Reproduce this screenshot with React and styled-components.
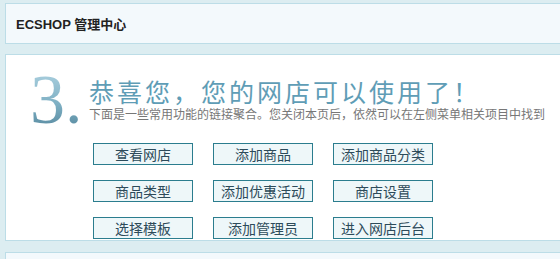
import React from "react";
import styled, { createGlobalStyle } from "styled-components";

const Global = createGlobalStyle`
  html, body { margin: 0; padding: 0; background: #dcedf1; overflow: hidden; }
  body { font-family: "Liberation Sans", "Noto Sans CJK SC", sans-serif; }
`;

const Page = styled.div`
  width: 560px;
  height: 259px;
  overflow: hidden;
  padding: 3px 0 0 5px;
  box-sizing: border-box;
`;

const Panel = styled.div`
  width: 620px;
  box-sizing: border-box;
  border: 1px solid #bcdde7;
  background: ${(p) => p.$bg || "#fff"};
  margin-bottom: ${(p) => p.$mb || 0}px;
  height: ${(p) => p.$h || 40}px;
`;

const Header = styled(Panel)`
  display: flex;
  align-items: center;
  padding-left: 10px;
`;

const Title = styled.h1`
  margin: 0;
  font-size: 13px;
  font-weight: bold;
  color: #222;
  font-family: "Liberation Sans", "Noto Sans CJK SC", sans-serif;
`;

const Main = styled(Panel)`
  padding: 10px 0 0 24px;
`;

const Intro = styled.div`
  display: flex;
  align-items: flex-start;
`;

const Big = styled.div`
  font-family: "Liberation Serif", serif;
  font-size: 70px;
  line-height: 70px;
  width: 59px;
  background: linear-gradient(180deg, #b3d6e4 0%, #7fb0c4 55%, #4f8298 100%);
  -webkit-background-clip: text;
  background-clip: text;
  color: transparent;
`;

const TextCol = styled.div`
  display: flex;
  flex-direction: column;
  padding-top: 11px;
`;

const Heading = styled.h2`
  margin: 0;
  font-family: "Noto Sans CJK SC", sans-serif;
  font-weight: normal;
  font-size: 25px;
  line-height: 31px;
  letter-spacing: 3px;
  color: #5f9db6;
  white-space: nowrap;
`;

const Sub = styled.p`
  margin: 0;
  font-family: "Noto Sans CJK SC", sans-serif;
  font-size: 12px;
  line-height: 14px;
  color: #777;
  white-space: nowrap;
`;

const Grid = styled.div`
  display: grid;
  grid-template-columns: repeat(3, 100px);
  grid-auto-rows: 22px;
  column-gap: 20px;
  row-gap: 15px;
  margin: 8px 0 0 63px;
`;

const Btn = styled.button`
  box-sizing: border-box;
  border: 1px solid #2b7d8e;
  background: #eef7f9;
  color: #2d4b5a;
  font-family: "Noto Sans CJK SC", sans-serif;
  font-size: 14px;
  line-height: 20px;
  padding: 0;
  cursor: pointer;
`;

const links = [
  "查看网店",
  "添加商品",
  "添加商品分类",
  "商品类型",
  "添加优惠活动",
  "商店设置",
  "选择模板",
  "添加管理员",
  "进入网店后台",
];

export default function App() {
  return (
    <>
      <Global />
      <Page>
        <Header $bg="#f3f9fc" $mb={10} $h={41}>
          <Title>ECSHOP 管理中心</Title>
        </Header>
        <Main $mb={11} $h={187}>
          <Intro>
            <Big>3.</Big>
            <TextCol>
              <Heading>恭喜您，您的网店可以使用了！</Heading>
              <Sub>下面是一些常用功能的链接聚合。您关闭本页后，依然可以在左侧菜单相关项目中找到</Sub>
            </TextCol>
          </Intro>
          <Grid>
            {links.map((l) => (
              <Btn key={l}>{l}</Btn>
            ))}
          </Grid>
        </Main>
        <Panel $bg="#f3f9fc" $h={40} />
      </Page>
    </>
  );
}
